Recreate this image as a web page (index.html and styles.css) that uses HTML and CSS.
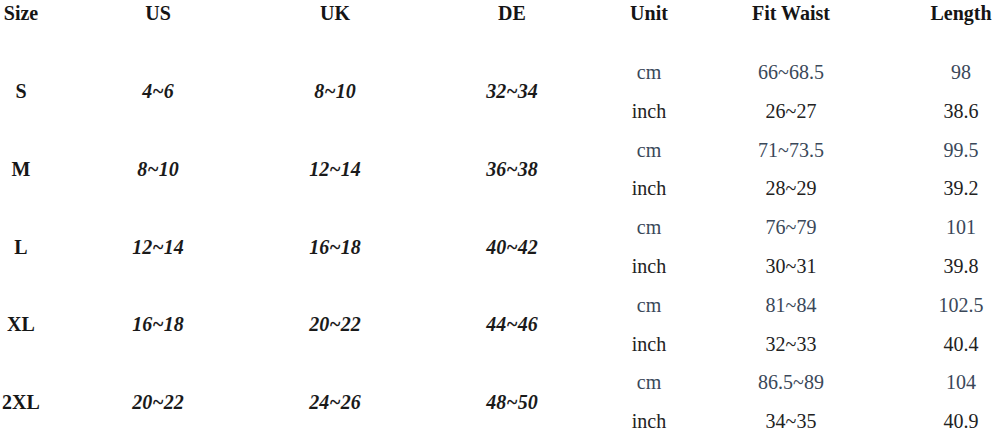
FILE: index.html
```html
<!DOCTYPE html>
<html lang="en">
<head>
<meta charset="utf-8">
<title>Size Chart</title>
<link rel="stylesheet" href="styles.css">
</head>
<body>
<div class="chart">
  <div class="grid">
    <div class="cell head">Size</div>
    <div class="cell head">US</div>
    <div class="cell head">UK</div>
    <div class="cell head">DE</div>
    <div class="cell head">Unit</div>
    <div class="cell head">Fit Waist</div>
    <div class="cell head">Length</div>

    <div class="cell size">S</div>
    <div class="cell conv">4~6</div>
    <div class="cell conv">8~10</div>
    <div class="cell conv">32~34</div>
    <div class="cell cm">cm</div>
    <div class="cell cm">66~68.5</div>
    <div class="cell cm">98</div>
    <div class="cell inch">inch</div>
    <div class="cell inch">26~27</div>
    <div class="cell inch">38.6</div>

    <div class="cell size">M</div>
    <div class="cell conv">8~10</div>
    <div class="cell conv">12~14</div>
    <div class="cell conv">36~38</div>
    <div class="cell cm">cm</div>
    <div class="cell cm">71~73.5</div>
    <div class="cell cm">99.5</div>
    <div class="cell inch">inch</div>
    <div class="cell inch">28~29</div>
    <div class="cell inch">39.2</div>

    <div class="cell size">L</div>
    <div class="cell conv">12~14</div>
    <div class="cell conv">16~18</div>
    <div class="cell conv">40~42</div>
    <div class="cell cm">cm</div>
    <div class="cell cm">76~79</div>
    <div class="cell cm">101</div>
    <div class="cell inch">inch</div>
    <div class="cell inch">30~31</div>
    <div class="cell inch">39.8</div>

    <div class="cell size">XL</div>
    <div class="cell conv">16~18</div>
    <div class="cell conv">20~22</div>
    <div class="cell conv">44~46</div>
    <div class="cell cm">cm</div>
    <div class="cell cm">81~84</div>
    <div class="cell cm">102.5</div>
    <div class="cell inch">inch</div>
    <div class="cell inch">32~33</div>
    <div class="cell inch">40.4</div>

    <div class="cell size">2XL</div>
    <div class="cell conv">20~22</div>
    <div class="cell conv">24~26</div>
    <div class="cell conv">48~50</div>
    <div class="cell cm">cm</div>
    <div class="cell cm">86.5~89</div>
    <div class="cell cm">104</div>
    <div class="cell inch">inch</div>
    <div class="cell inch">34~35</div>
    <div class="cell inch">40.9</div>
  </div>
</div>
</body>
</html>
```

FILE: styles.css
```css
html, body {
  margin: 0;
  padding: 0;
  background: #ffffff;
}

.chart {
  width: 997px;
  height: 433px;
  overflow: hidden;
  font-family: "Liberation Serif", "Times New Roman", serif;
  font-size: 20px;
  color: #1c1c1c;
}

.grid {
  display: grid;
  grid-template-columns: 102px 172px 182px 172px 102px 182px 158px;
  grid-template-rows: 53px repeat(10, 38.8px);
  margin-left: -30px;
}

.cell {
  display: flex;
  justify-content: center;
  align-items: center;
  white-space: nowrap;
  line-height: 38.8px;
}

.head {
  align-items: flex-start;
  font-weight: bold;
  line-height: 26px;
  color: #151515;
}

.size {
  grid-row: span 2;
  font-weight: bold;
  color: #161616;
}

.conv {
  grid-row: span 2;
  font-weight: bold;
  font-style: italic;
  color: #1a1a1a;
}

.cm {
  color: #3a4859;
}

.inch {
  color: #222222;
}
```
